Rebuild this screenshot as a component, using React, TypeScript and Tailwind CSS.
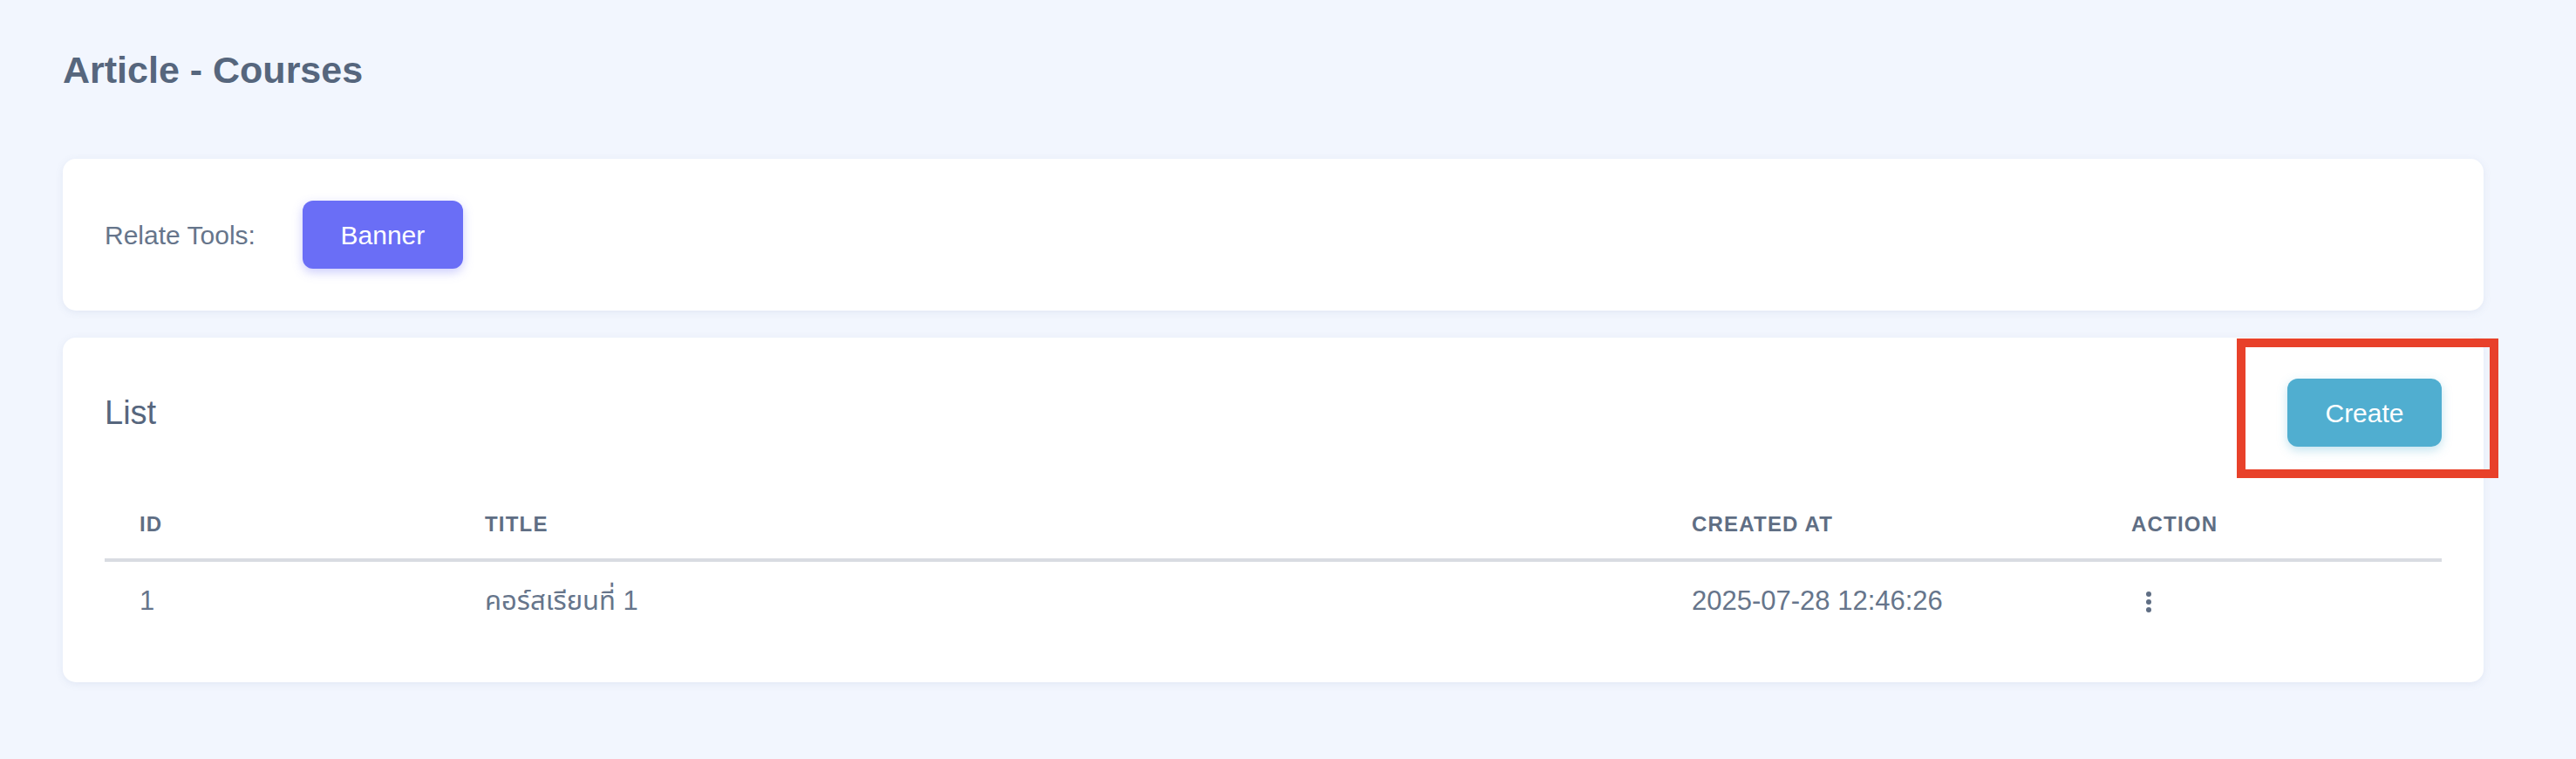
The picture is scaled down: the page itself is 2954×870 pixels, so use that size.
import React from 'react';

const rows = [{ id: 1, title: 'คอร์สเรียนที่ 1', createdAt: '2025-07-28 12:46:26' }];

const KebabIcon = () => (
    <svg width="8" height="26" viewBox="0 0 8 26" fill="#5f6e84">
        <circle cx="4" cy="4" r="3" />
        <circle cx="4" cy="13" r="3" />
        <circle cx="4" cy="22" r="3" />
    </svg>
);

export default function App() {
    return (
        <div
            className="min-h-[870px] w-full bg-[#f2f6fe] text-[#5a6a82] pl-[72px] pr-[106px] pt-[52px]"
            style={{ fontFamily: '"Liberation Sans", "Noto Sans", "Noto Sans Thai", sans-serif' }}
        >
            <h1 className="text-[43px] font-bold leading-[56px] text-[#56667d]">Article - Courses</h1>

            {/* related tools */}
            <div className="mt-[74px] bg-white rounded-[15px] shadow-[0_2px_10px_rgba(90,110,160,0.10)] px-[48px] py-[48px] flex items-center">
                <span className="text-[30px] text-[#66758b] mr-[54px]">Relate Tools:</span>
                <button className="h-[78px] w-[184px] rounded-[12px] bg-[#6a6ef6] text-white text-[30px] shadow-[0_4px_12px_rgba(106,110,246,0.35)]">
                    Banner
                </button>
            </div>

            {/* list */}
            <div className="mt-[31px] bg-white rounded-[15px] shadow-[0_2px_10px_rgba(90,110,160,0.10)] px-[48px] pt-[47px] pb-[48px]">
                <div className="flex items-center justify-between h-[78px]">
                    <span className="text-[38px] text-[#56667d]">List</span>
                    <div className="relative">
                        <button className="h-[78px] w-[177px] rounded-[12px] bg-[#50aed0] text-white text-[30px] shadow-[0_4px_12px_rgba(80,174,208,0.35)]">
                            Create
                        </button>
                        <div className="absolute -left-[58px] -top-[46px] w-[300px] h-[160px] border-[10px] border-[#e8412a] pointer-events-none" />
                    </div>
                </div>

                <table className="mt-[50px] w-full border-collapse">
                    <thead>
                        <tr className="h-[80px] border-b-4 border-[#d9dce2] text-left text-[24px] font-semibold tracking-[0.05em] text-[#5f6e84]">
                            <th className="w-[396px] pl-[40px] font-semibold">ID</th>
                            <th className="w-[1384px] pl-[40px] font-semibold">TITLE</th>
                            <th className="w-[504px] pl-[40px] font-semibold">CREATED AT</th>
                            <th className="pl-[40px] font-semibold">ACTION</th>
                        </tr>
                    </thead>
                    <tbody>
                        {rows.map(r => (
                            <tr key={r.id} className="h-[92px] text-[31px] text-[#66758b]">
                                <td className="pl-[40px]">{r.id}</td>
                                <td className="pl-[40px]">{r.title}</td>
                                <td className="pl-[40px]">{r.createdAt}</td>
                                <td className="pl-[56px] pt-[2px]">
                                    <KebabIcon />
                                </td>
                            </tr>
                        ))}
                    </tbody>
                </table>
            </div>
        </div>
    );
}
